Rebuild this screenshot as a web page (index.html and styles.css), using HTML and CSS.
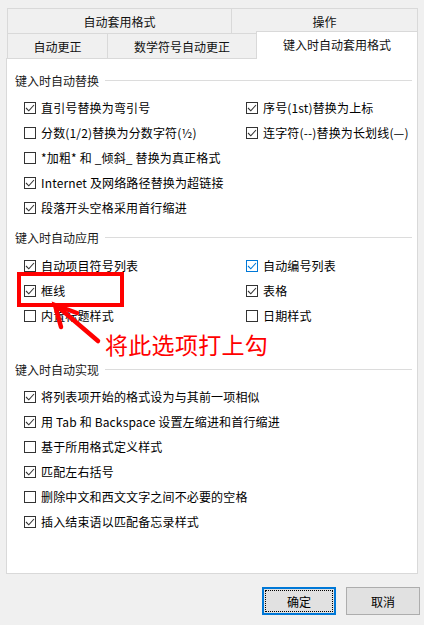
FILE: index.html
```html
<!DOCTYPE html>
<html>

<head>
  <meta http-equiv="Content-Type" content="text/html; charset=utf-8">
  <link rel="stylesheet" href="styles.css">
</head>

<body>

  <div class="dialog">

    <div class="tabs">
      <div class="tab-row">
        <div class="tab t-format">自动套用格式</div>
        <div class="tab t-action last">操作</div>
      </div>
      <div class="tab-row">
        <div class="tab t-auto">自动更正</div>
        <div class="tab t-math">数学符号自动更正</div>
        <div class="tab t-typing active">键入时自动套用格式</div>
      </div>
    </div>

    <div class="panel">

      <div class="group">
        <div class="group-title">键入时自动替换</div>
        <div class="options">
          <div class="col left">
            <div class="opt"><span class="box on"></span>直引号替换为弯引号</div>
            <div class="opt"><span class="box"></span>分数(1/2)替换为分数字符(½)</div>
            <div class="opt"><span class="box"></span>*加粗* 和 _倾斜_ 替换为真正格式</div>
            <div class="opt"><span class="box on"></span>Internet 及网络路径替换为超链接</div>
            <div class="opt"><span class="box on"></span>段落开头空格采用首行缩进</div>
          </div>
          <div class="col">
            <div class="opt"><span class="box on"></span>序号(1st)替换为上标</div>
            <div class="opt"><span class="box on"></span>连字符(--)替换为长划线(—)</div>
          </div>
        </div>
      </div>

      <div class="group g2">
        <div class="group-title">键入时自动应用</div>
        <div class="options o2">
          <div class="col left">
            <div class="opt"><span class="box on"></span>自动项目符号列表</div>
            <div class="opt"><span class="box on"></span>框线</div>
            <div class="opt"><span class="box"></span>内置标题样式</div>
          </div>
          <div class="col">
            <div class="opt"><span class="box on hover"></span>自动编号列表</div>
            <div class="opt"><span class="box on"></span>表格</div>
            <div class="opt"><span class="box"></span>日期样式</div>
          </div>
        </div>
      </div>

      <div class="group g3">
        <div class="group-title">键入时自动实现</div>
        <div class="options">
          <div class="col">
            <div class="opt"><span class="box on"></span>将列表项开始的格式设为与其前一项相似</div>
            <div class="opt"><span class="box on"></span>用 Tab 和 Backspace 设置左缩进和首行缩进</div>
            <div class="opt"><span class="box"></span>基于所用格式定义样式</div>
            <div class="opt"><span class="box on"></span>匹配左右括号</div>
            <div class="opt"><span class="box"></span>删除中文和西文文字之间不必要的空格</div>
            <div class="opt"><span class="box on"></span>插入结束语以匹配备忘录样式</div>
          </div>
        </div>
      </div>

    </div>

    <div class="buttons">
      <button class="btn default">确定</button>
      <button class="btn">取消</button>
    </div>

  </div>

  <!-- annotation drawn over the screenshot -->
  <div class="mark-box"></div>
  <svg class="mark-arrow" width="70" height="60" viewBox="0 0 70 60">
    <path d="M58 45 L17 10" stroke="#f00" stroke-width="4.5" fill="none" stroke-linecap="round" />
    <path d="M37 17 L15 9 L21 31" stroke="#f00" stroke-width="4.5" fill="none" stroke-linejoin="miter" stroke-linecap="round" />
  </svg>
  <div class="mark-text">将此选项打上勾</div>

  <script>
    document.querySelectorAll('.box.on').forEach(function (box) {
      box.innerHTML = '<svg width="10" height="10" viewBox="0 0 10 10"><path d="M1 5 L3.8 7.8 L9 2" fill="none" stroke="currentColor" stroke-width="1.1" /></svg>';
    });
  </script>

</body>

</html>
```

FILE: styles.css
```css
body {
  margin: 0;
  background-color: #f0f0f0;
  font-family: "Noto Sans CJK SC", "Microsoft YaHei", sans-serif;
  font-size: 12px;
  color: #000;
  width: 424px;
  height: 625px;
  overflow: hidden;
  position: relative;
}

.dialog {
  padding-top: 8px;
}

.tabs {
  margin-left: 7px;
  width: 411px;
}

.tab-row {
  display: flex;
  align-items: flex-start;
}

.tab {
  box-sizing: border-box;
  height: 25px;
  line-height: 26px;
  text-align: center;
  border-top: 1px solid #d9d9d9;
  border-left: 1px solid #d9d9d9;
  background-color: #f0f0f0;
  color: #111;
}

.tab.last {
  border-right: 1px solid #d9d9d9;
}

.t-format {
  width: 224px;
}

.t-action {
  width: 187px;
}

.t-auto {
  width: 100px;
}

.t-math {
  width: 149px;
}

.t-typing {
  width: 162px;
}

.tab.active {
  position: relative;
  z-index: 1;
  height: 28px;
  margin-top: -2px;
  margin-bottom: -1px;
  line-height: 26px;
  background-color: #fff;
  border-right: 1px solid #d9d9d9;
}

.panel {
  box-sizing: border-box;
  margin-left: 6px;
  width: 412px;
  height: 516px;
  background-color: #fff;
  border: 1px solid #d9d9d9;
  padding-top: 12px;
}

.group-title {
  display: flex;
  align-items: center;
  height: 18px;
  padding-left: 8px;
  color: #1a1a1a;
}

.group-title::after {
  content: "";
  flex: 1;
  height: 1px;
  margin-left: 6px;
  margin-right: 5px;
  background-color: #dcdcdc;
}

.options {
  display: flex;
  margin-top: 6px;
  padding-left: 17px;
}

.options.o2 {
  margin-top: 7px;
}

.g2 {
  margin-top: 8px;
}

.g3 {
  margin-top: 32px;
}

.col.left {
  width: 222px;
  flex: none;
}

.opt {
  display: flex;
  align-items: center;
  height: 25px;
  white-space: nowrap;
  letter-spacing: 0.15px;
}

.box {
  box-sizing: border-box;
  width: 12px;
  height: 12px;
  margin-right: 5px;
  border: 1px solid #333;
  color: #333;
  display: flex;
  align-items: center;
  justify-content: center;
  flex: none;
}

.box.hover {
  border-color: #0078d7;
  color: #0078d7;
}

.box svg {
  display: block;
}

.buttons {
  display: flex;
  justify-content: flex-end;
  gap: 10px;
  margin-top: 13px;
  padding-right: 4px;
}

.btn {
  box-sizing: border-box;
  position: relative;
  width: 74px;
  height: 28px;
  padding: 0;
  font-family: "Noto Sans CJK SC", "Microsoft YaHei", sans-serif;
  font-size: 12px;
  color: #000;
  background-color: #e1e1e1;
  border: 1px solid #adadad;
}

.btn.default {
  border: 2px solid #0078d7;
}

.btn.default::after {
  content: "";
  position: absolute;
  left: 1px;
  top: 1px;
  right: 1px;
  bottom: 1px;
  border: 1px dotted #000;
}

.mark-box {
  position: absolute;
  left: 17px;
  top: 272px;
  width: 107px;
  height: 35px;
  box-sizing: border-box;
  border: 4px solid #f00;
}

.mark-arrow {
  position: absolute;
  left: 40px;
  top: 296px;
}

.mark-text {
  position: absolute;
  left: 105px;
  top: 328px;
  font-size: 23px;
  line-height: 32px;
  color: #f00;
  letter-spacing: 0.3px;
}
```
